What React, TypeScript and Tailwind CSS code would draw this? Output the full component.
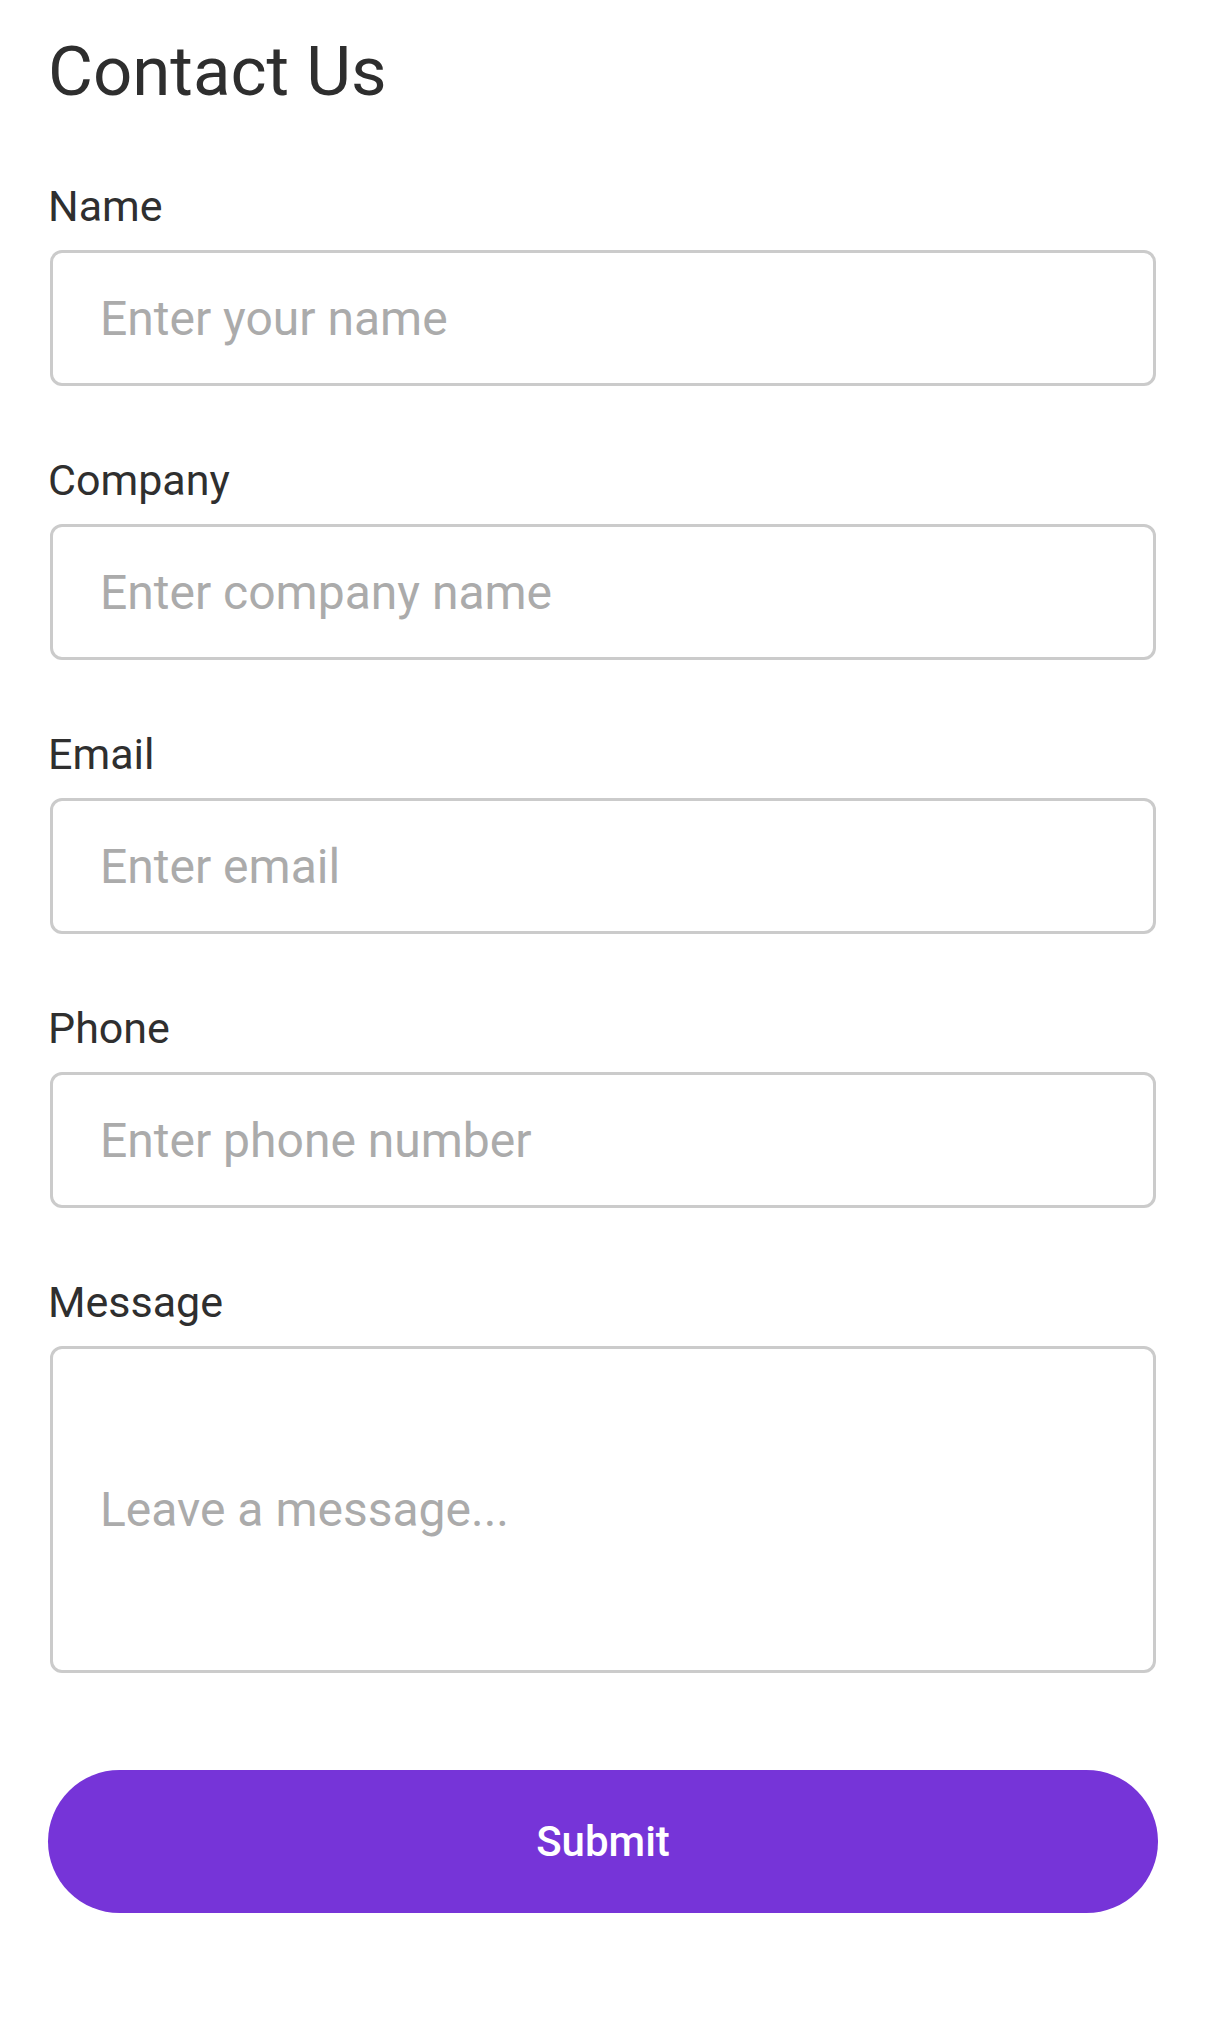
import { useState } from 'react'

const fields = [
  { key: 'name', label: 'Name', placeholder: 'Enter your name' },
  { key: 'company', label: 'Company', placeholder: 'Enter company name' },
  { key: 'email', label: 'Email', placeholder: 'Enter email' },
  { key: 'phone', label: 'Phone', placeholder: 'Enter phone number' },
]

export default function App() {
  const [form, setForm] = useState<Record<string, string>>({})
  const set = (k: string, v: string) => setForm(f => ({ ...f, [k]: v }))

  return (
    <div className="min-h-[2026px] bg-white font-['Roboto','Liberation_Sans',sans-serif] px-[48px] pt-[32px]">
      <div className="flex flex-col gap-[69px]">
        <h1 className="text-[69px] leading-[80px] font-normal text-[#2e2e2e]">Contact Us</h1>

        {fields.map(f => (
          <div key={f.key} className="flex flex-col gap-[19px]">
            <label className="text-[43px] leading-[50px] text-[#2f2f2f]">{f.label}</label>
            <input
              className="mx-[2px] h-[136px] rounded-[12px] border-[3px] border-[#cbcbcb] bg-white px-[47px] text-[48px] text-[#2f2f2f] outline-none placeholder:text-[#ababab]"
              placeholder={f.placeholder}
              value={form[f.key] ?? ''}
              onChange={e => set(f.key, e.target.value)}
            />
          </div>
        ))}

        <div className="flex flex-col gap-[19px]">
          <label className="text-[43px] leading-[50px] text-[#2f2f2f]">Message</label>
          <textarea
            className="mx-[2px] h-[327px] resize-none rounded-[12px] border-[3px] border-[#cbcbcb] bg-white px-[47px] pt-[133px] text-[48px] leading-[56px] text-[#2f2f2f] outline-none placeholder:text-[#ababab]"
            placeholder="Leave a message..."
            value={form.message ?? ''}
            onChange={e => set('message', e.target.value)}
          />
        </div>
      </div>

      <button className="mt-[97px] flex h-[143px] w-full items-center justify-center rounded-full bg-[#7634d8] text-[42px] font-medium text-white">
        Submit
      </button>
    </div>
  )
}
